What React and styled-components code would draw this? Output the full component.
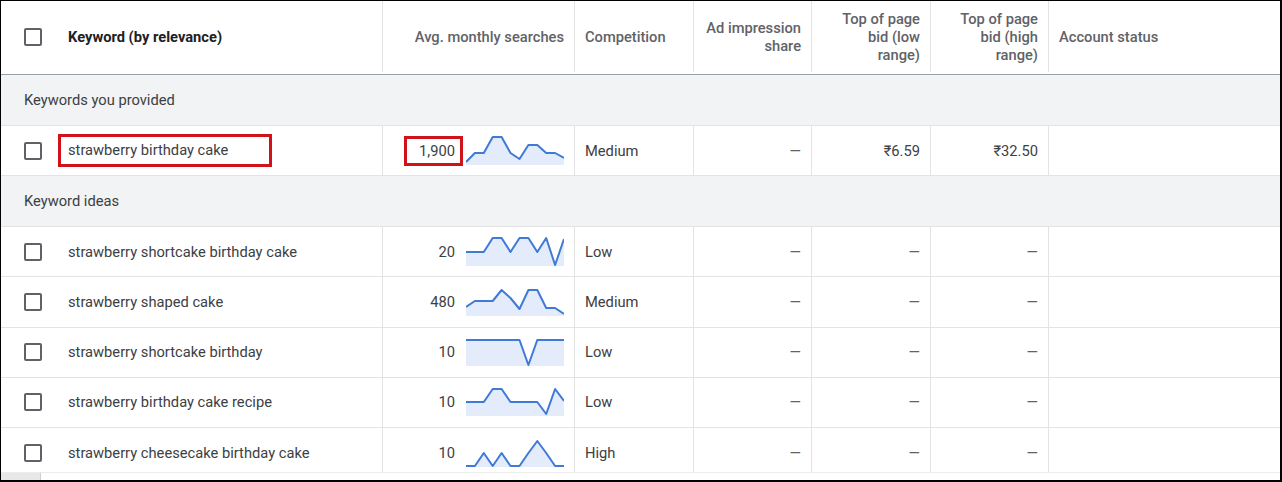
import React from "react";
import styled, { createGlobalStyle } from "styled-components";

const COLS = "382px 192px 119px 118px 119px 118px 1fr";

const GlobalStyle = createGlobalStyle`
  body {
    margin: 0;
    background: #fff;
    font-family: Roboto, "Noto Sans", Arial, sans-serif;
  }
  * {
    box-sizing: border-box;
  }
`;

const Frame = styled.div`
  position: relative;
  width: 1282px;
  height: 482px;
  border: 1px solid #000;
  border-right-width: 2px;
  border-bottom-width: 2px;
  overflow: hidden;
  font-size: 14.7px;
  color: #3c4043;
`;

const HeaderRow = styled.div`
  display: grid;
  grid-template-columns: ${COLS};
  height: 74px;
  border-bottom: 1px solid #9aa0a6;
`;

const HeaderCell = styled.div`
  display: flex;
  align-items: center;
  justify-content: ${(p) => (p.$right ? "flex-end" : "flex-start")};
  text-align: ${(p) => (p.$right ? "right" : "left")};
  margin-bottom: 2px;
  padding: 0 10px;
  border-right: ${(p) => (p.$last ? "none" : "1px solid #e3e3e3")};
  color: #5f6368;
  font-weight: 500;
  line-height: 18px;
`;

const KeywordHead = styled(HeaderCell)`
  padding-left: 23px;
  gap: 26px;
  color: #202124;
  font-weight: 700;
`;

const Checkbox = styled.span`
  flex: none;
  width: 18px;
  height: 18px;
  border: 2px solid #5f6368;
  border-radius: 2px;
  background: #fff;
`;

const SectionRow = styled.div`
  display: flex;
  align-items: center;
  height: 51px;
  padding-left: 23px;
  background: #f1f3f4;
  border-bottom: 1px solid #e3e3e3;
  color: #3c4043;
`;

const DataRow = styled.div`
  display: grid;
  grid-template-columns: ${COLS};
  height: 50.2px;
  border-bottom: 1px solid #e3e3e3;
`;

const Cell = styled.div`
  display: flex;
  align-items: center;
  justify-content: ${(p) => (p.$right ? "flex-end" : "flex-start")};
  padding: 0 10px;
  border-right: ${(p) => (p.$last ? "none" : "1px solid #e3e3e3")};
  color: #3c4043;
`;

const KeywordCell = styled(Cell)`
  padding-left: 23px;
  gap: 26px;
`;

const SearchCell = styled(Cell)`
  gap: 11px;
`;

const Keyword = styled.span`
  line-height: 20px;
  white-space: nowrap;
  ${(p) =>
    p.$boxed &&
    `
    margin-left: -10px;
    padding: 3px 41px 4px 7px;
    border: 3px solid #d0121b;
  `}
`;

const Volume = styled.span`
  line-height: 20px;
  ${(p) =>
    p.$boxed &&
    `
    margin-right: -8px;
    padding: 2px 5px 2px 12px;
    border: 3px solid #d0121b;
  `}
`;

const Dash = styled.span`
  color: #5f6368;
`;

const Scrollbar = styled.div`
  position: absolute;
  left: 0;
  right: 0;
  bottom: 0;
  height: 8px;
  border-top: 1px solid #ececec;
  background: #fff;
`;

const Thumb = styled.div`
  width: 40px;
  height: 100%;
  background: #e8e8e8;
  border-right: 1px solid #cfcfcf;
`;

const Sparkline = ({ data }) => {
  const step = 98 / (data.length - 1);
  const pts = data.map((v, i) => `${(i * step).toFixed(1)},${v + 1}`).join(" ");
  return (
    <svg width="98" height="30" viewBox="0 0 98 30" style={{ flex: "none" }}>
      <polygon points={`0,29 ${pts} 98,29`} fill="#e4ecfb" />
      <polyline
        points={pts}
        fill="none"
        stroke="#3f7ad6"
        strokeWidth="2"
        strokeLinejoin="round"
      />
    </svg>
  );
};

const provided = {
  keyword: "strawberry birthday cake",
  searches: "1,900",
  trend: [25, 16, 16, 0, 0, 16, 22, 8, 8, 16, 16, 21],
  competition: "Medium",
  low: "₹6.59",
  high: "₹32.50",
};

const ideas = [
  {
    keyword: "strawberry shortcake birthday cake",
    searches: "20",
    trend: [14, 14, 14, 0, 0, 14, 0, 0, 14, 0, 27, 1],
    competition: "Low",
  },
  {
    keyword: "strawberry shaped cake",
    searches: "480",
    trend: [19, 13, 13, 13, 2, 10, 21, 2, 2, 20, 20, 26],
    competition: "Medium",
  },
  {
    keyword: "strawberry shortcake birthday",
    searches: "10",
    trend: [2, 2, 2, 2, 2, 2, 2, 27, 2, 2, 2, 2],
    competition: "Low",
  },
  {
    keyword: "strawberry birthday cake recipe",
    searches: "10",
    trend: [14, 14, 14, 1, 1, 14, 14, 14, 14, 26, 1, 13],
    competition: "Low",
  },
  {
    keyword: "strawberry cheesecake birthday cake",
    searches: "10",
    trend: [27, 27, 14, 27, 14, 27, 27, 14, 2, 14, 27, 27],
    competition: "High",
  },
];

const KeywordRow = ({ row, boxed }) => (
  <DataRow>
    <KeywordCell>
      <Checkbox />
      <Keyword $boxed={boxed}>{row.keyword}</Keyword>
    </KeywordCell>
    <SearchCell $right>
      <Volume $boxed={boxed}>{row.searches}</Volume>
      <Sparkline data={row.trend} />
    </SearchCell>
    <Cell>{row.competition}</Cell>
    <Cell $right>
      <Dash>—</Dash>
    </Cell>
    <Cell $right>{row.low || <Dash>—</Dash>}</Cell>
    <Cell $right>{row.high || <Dash>—</Dash>}</Cell>
    <Cell $last />
  </DataRow>
);

export default function App() {
  return (
    <>
      <GlobalStyle />
      <Frame>
        <HeaderRow>
          <KeywordHead>
            <Checkbox />
            Keyword (by relevance)
          </KeywordHead>
          <HeaderCell $right>Avg. monthly searches</HeaderCell>
          <HeaderCell>Competition</HeaderCell>
          <HeaderCell $right>
            Ad impression
            <br />
            share
          </HeaderCell>
          <HeaderCell $right>
            Top of page
            <br />
            bid (low
            <br />
            range)
          </HeaderCell>
          <HeaderCell $right>
            Top of page
            <br />
            bid (high
            <br />
            range)
          </HeaderCell>
          <HeaderCell $last>Account status</HeaderCell>
        </HeaderRow>
        <SectionRow>Keywords you provided</SectionRow>
        <KeywordRow row={provided} boxed />
        <SectionRow>Keyword ideas</SectionRow>
        {ideas.map((row) => (
          <KeywordRow key={row.keyword} row={row} />
        ))}
        <Scrollbar>
          <Thumb />
        </Scrollbar>
      </Frame>
    </>
  );
}
